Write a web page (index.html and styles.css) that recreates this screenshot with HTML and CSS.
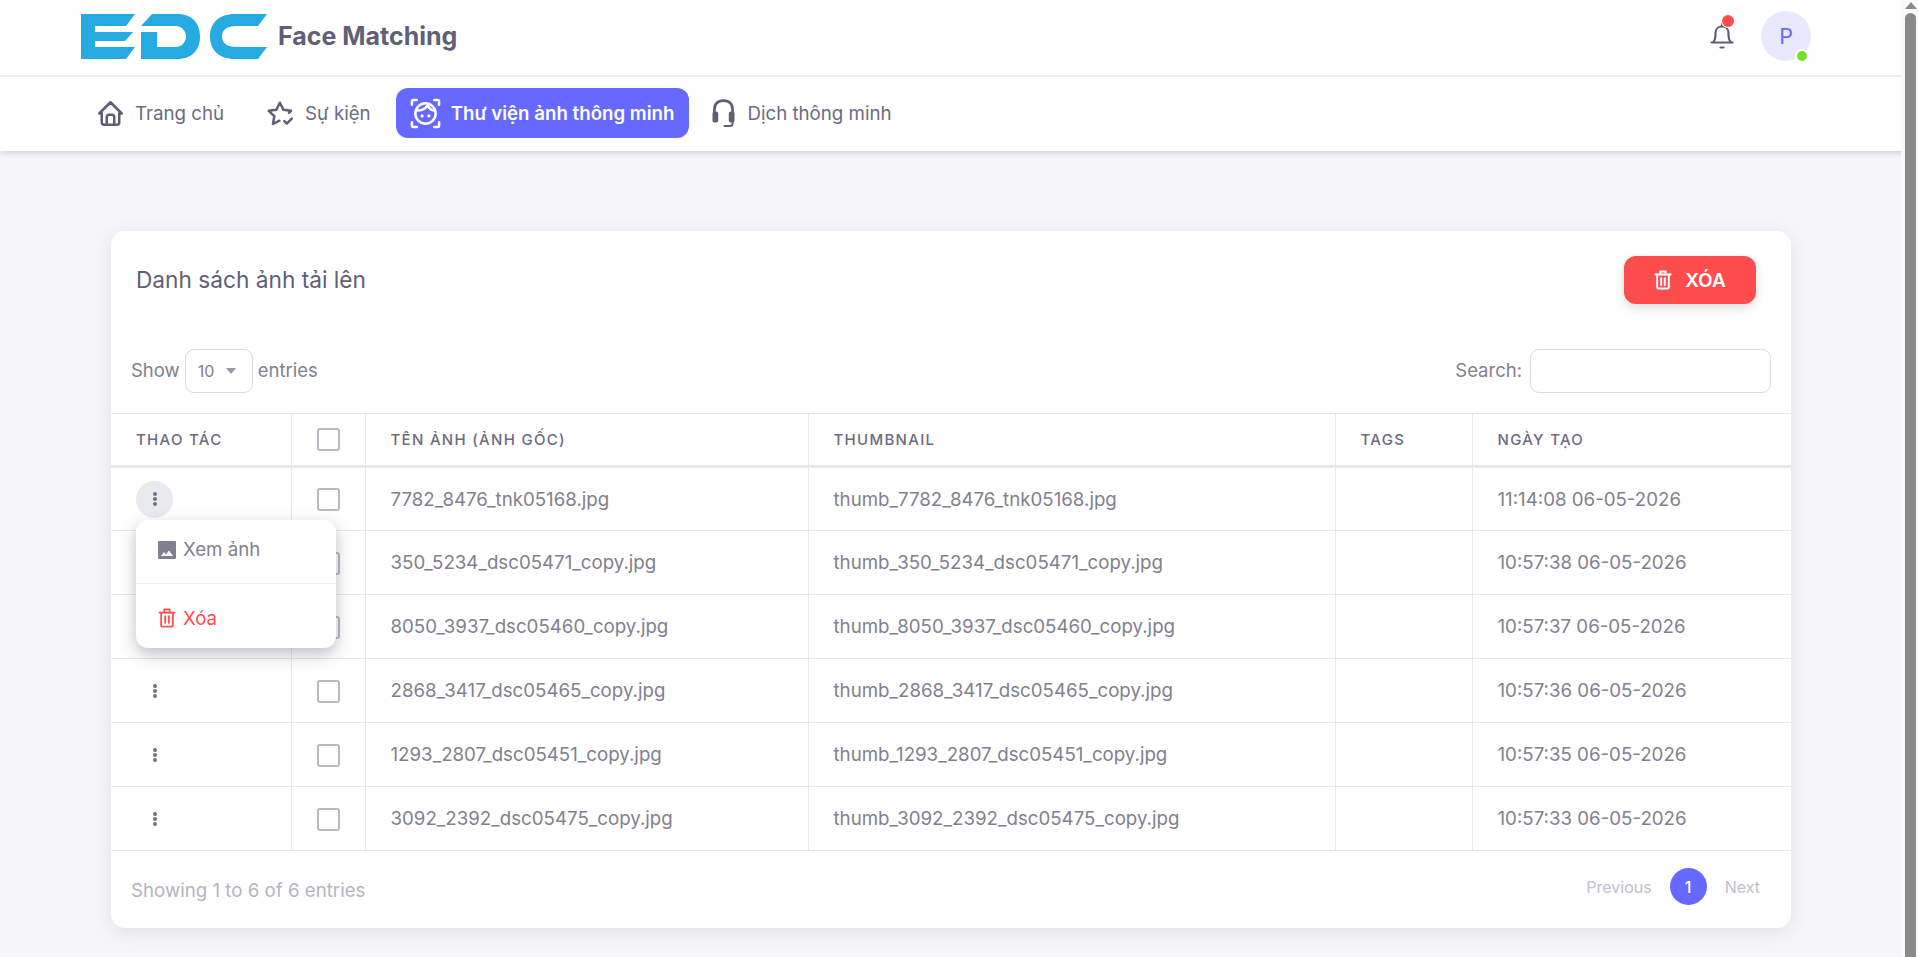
FILE: index.html
```html
<!DOCTYPE html>
<html lang="vi">
<head>
  <meta charset="UTF-8">
  <meta name="viewport" content="width=device-width, initial-scale=1.0">
  <title>Face Matching</title>
  <link rel="stylesheet" href="styles.css">
</head>
<body>
  <header class="page-header">
    <div class="topbar">
      <div class="brand">
        <svg class="logo" viewBox="0 0 187 45" width="187" height="45" fill="#25aae1">
          <path d="M0 0H54L45 12H14V18H52L44 27H14V33H54L45 45H0Z"/>
          <path d="M60 12L71 0H96C112 0 119 10 119 22.500C119 35 112 45 96 45H60V18H76V33H94C101 33 105 28 105 22.500C105 17 101 12 94 12Z"/>
          <path d="M186 0L177 12H155C146 12 141 16 141 22.500C141 29 146 33 155 33H186L177 45H154C138 45 129 36 129 22.500C129 9 138 0 154 0Z"/>
        </svg>
        <span class="brand-name">Face Matching</span>
      </div>
      <div class="topbar-right">
        <div class="bell">
          <svg viewBox="0 0 24 28" width="24" height="28" fill="none" stroke="#5f5e72" stroke-width="2.200" stroke-linecap="round" stroke-linejoin="round">
            <path d="M3.500 20C5 18 5.500 16 5.500 13V11C5.500 7 8.500 4.500 12 4.500C15.500 4.500 18.500 7 18.500 11V13C18.500 16 19 18 20.500 20"/>
            <path d="M1.500 20.500H22.500"/>
            <path d="M12 1.500V4"/>
            <path d="M10.500 25.500H13.500"/>
          </svg>
          <span class="bell-dot"></span>
        </div>
        <div class="avatar">P<span class="avatar-dot"></span></div>
      </div>
    </div>
    <nav class="menu">
      <a class="menu-item home">
        <svg viewBox="2 2 20 20" width="25" height="25" fill="none" stroke="#5f5e72" stroke-width="2" stroke-linecap="round" stroke-linejoin="round"><path d="M5 12H3l9-9 9 9h-2"/><path d="M5 12v7a2 2 0 0 0 2 2h10a2 2 0 0 0 2-2v-7"/><path d="M9 21v-6a2 2 0 0 1 2-2h2a2 2 0 0 1 2 2v6"/></svg>
        Trang chủ
      </a>
      <a class="menu-item event">
        <svg viewBox="1 2 21 21" width="26" height="26" fill="none" stroke="#5f5e72" stroke-width="2" stroke-linecap="round" stroke-linejoin="round"><path d="M11 18.700l-5.200 2.700 1.100-6.300-4.500-4.400 6.200-.9 2.800-5.600 2.800 5.600 6.200.9-1.600 1.600"/><path d="M15 19l2 2 4-4"/></svg>
        Sự kiện
      </a>
      <a class="menu-item active">
        <svg viewBox="0 0 32 32" width="31" height="31" fill="none" stroke="#fff" stroke-width="2.600" stroke-linecap="round" stroke-linejoin="round"><path d="M2 7V3.500C2 2.500 2.500 2 3.500 2H7M25 2h3.500C29.500 2 30 2.500 30 3.500V7M30 25v3.500c0 1-.5 1.500-1.500 1.500H25M7 30H3.500C2.500 30 2 29.500 2 28.500V25"/><circle cx="16" cy="16" r="10.500"/><path d="M6.500 13C12 13 16 11 18 7.500C20 11 23 13 25.500 13"/><circle cx="12.500" cy="18.500" r="1.600" fill="#fff" stroke="none"/><circle cx="19.500" cy="18.500" r="1.600" fill="#fff" stroke="none"/></svg>
        Thư viện ảnh thông minh
      </a>
      <a class="menu-item headset">
        <svg viewBox="0 0 24 29" width="23" height="28" fill="none" stroke="#5f5e72" stroke-width="2.800" stroke-linecap="round" stroke-linejoin="round"><path d="M2.500 15V11C2.500 5 6 1.500 12 1.500S21.500 5 21.500 11V15"/><rect x="1.500" y="14" width="4" height="9.500" rx="1.200" fill="#5f5e72" stroke-width="2"/><rect x="18.500" y="14" width="4" height="9.500" rx="1.200" fill="#5f5e72" stroke-width="2"/><path d="M21.500 24v1.500c0 1.500-1 2.500-2.500 2.500h-6" stroke-width="2"/></svg>
        Dịch thông minh
      </a>
    </nav>
  </header>

  <main class="content">
    <section class="card">
      <div class="card-head">
        <h5 class="card-title">Danh sách ảnh tải lên</h5>
        <button class="btn-delete">
          <svg viewBox="0 0 20 22" width="18" height="20" fill="none" stroke="#fff" stroke-width="2.200" stroke-linecap="round" stroke-linejoin="round"><path d="M1.500 5H18.500"/><path d="M3.500 5V19C3.500 20 4 20.500 5 20.500H15C16 20.500 16.500 20 16.500 19V5"/><path d="M7 5V1.500H13V5"/><path d="M8 9V16.500"/><path d="M12 9V16.500"/></svg>
          XÓA
        </button>
      </div>

      <div class="table-tools">
        <div class="tool-left">
          <span class="tool-label">Show</span>
          <span class="page-size">10<i class="caret"></i></span>
          <span class="tool-label">entries</span>
        </div>
        <div class="tool-right">
          <span class="tool-label">Search:</span>
          <span class="search-box"></span>
        </div>
      </div>

      <table class="data-table">
        <colgroup>
          <col class="col-action"><col class="col-check"><col class="col-name"><col class="col-thumb"><col class="col-tags"><col>
        </colgroup>
        <thead>
          <tr>
            <th>Thao tác</th>
            <th class="cell-check"><span class="checkbox"></span></th>
            <th>Tên ảnh (ảnh gốc)</th>
            <th>Thumbnail</th>
            <th>Tags</th>
            <th>Ngày tạo</th>
          </tr>
        </thead>
        <tbody id="rows"></tbody>
      </table>

      <div class="table-foot">
        <div class="foot-info">Showing 1 to 6 of 6 entries</div>
        <div class="pager">
          <span>Previous</span>
          <span class="pager-current">1</span>
          <span>Next</span>
        </div>
      </div>

      <div class="action-menu">
        <a class="action-item">
          <svg viewBox="0 0 18 18" width="18" height="18" fill="#82808f"><path fill-rule="evenodd" d="M1 0h16a1 1 0 0 1 1 1v16a1 1 0 0 1-1 1H1a1 1 0 0 1-1-1V1a1 1 0 0 1 1-1zM3 15h12l-4-5.500-3 4-2-2.500z"/></svg>
          Xem ảnh
        </a>
        <a class="action-item danger">
          <svg viewBox="0 0 20 22" width="18" height="20" fill="none" stroke="#ff4c4c" stroke-width="2" stroke-linecap="round" stroke-linejoin="round"><path d="M1.500 5H18.500"/><path d="M3.500 5V19C3.500 20 4 20.500 5 20.500H15C16 20.500 16.500 20 16.500 19V5"/><path d="M7 5V1.500H13V5"/><path d="M8 9V16.500"/><path d="M12 9V16.500"/></svg>
          Xóa
        </a>
      </div>
    </section>
  </main>

  <div class="scrollbar">
    <span class="scroll-arrow"></span>
    <span class="scroll-thumb"></span>
  </div>

  <script>
    const images = [
      { name: "7782_8476_tnk05168.jpg", date: "11:14:08 06-05-2026" },
      { name: "350_5234_dsc05471_copy.jpg", date: "10:57:38 06-05-2026" },
      { name: "8050_3937_dsc05460_copy.jpg", date: "10:57:37 06-05-2026" },
      { name: "2868_3417_dsc05465_copy.jpg", date: "10:57:36 06-05-2026" },
      { name: "1293_2807_dsc05451_copy.jpg", date: "10:57:35 06-05-2026" },
      { name: "3092_2392_dsc05475_copy.jpg", date: "10:57:33 06-05-2026" }
    ];

    const rows = document.getElementById("rows");
    images.forEach((img, i) => {
      const tr = document.createElement("tr");
      tr.innerHTML = `
        <td><span class="dots${i === 0 ? " open" : ""}"><i></i><i></i><i></i></span></td>
        <td class="cell-check"><span class="checkbox"></span></td>
        <td>${img.name}</td>
        <td>thumb_${img.name}</td>
        <td></td>
        <td>${img.date}</td>`;
      rows.appendChild(tr);
    });
  </script>
</body>
</html>
```

FILE: styles.css
```css
* {
  box-sizing: border-box;
}

body {
  margin: 0;
  height: 957px;
  overflow: hidden;
  background: #f6f6f9;
  font-family: Inter, "Noto Sans", sans-serif;
  font-size: 18.700px;
  color: #82808f;
}

.page-header {
  background: #fff;
  box-shadow: 0 2px 6px rgba(47, 43, 61, 0.18);
}

.topbar {
  height: 77px;
  display: flex;
  align-items: center;
  justify-content: space-between;
  padding: 0 107px 3px 81px;
  border-bottom: 2px solid #eeeef0;
}

.brand {
  display: flex;
  align-items: center;
  gap: 10px;
}

.logo {
  display: block;
}

.brand-name {
  font-size: 25px;
  font-weight: 700;
  color: #605f75;
}

.topbar-right {
  display: flex;
  align-items: center;
  gap: 27px;
}

.bell {
  position: relative;
  width: 24px;
  height: 28px;
}

.bell-dot {
  position: absolute;
  top: -7px;
  right: 0;
  width: 12px;
  height: 12px;
  border-radius: 50%;
  background: #ff4c4c;
  box-shadow: 0 0 0 1px #fff;
}

.avatar {
  position: relative;
  width: 50px;
  height: 50px;
  border-radius: 50%;
  background: #e8e8ff;
  color: #6569ff;
  display: flex;
  align-items: center;
  justify-content: center;
  font-size: 21.500px;
}

.avatar-dot {
  position: absolute;
  right: 2px;
  bottom: -2px;
  width: 14px;
  height: 14px;
  border-radius: 50%;
  background: #72e128;
  border: 2px solid #fff;
}

.menu {
  height: 74px;
  display: flex;
  align-items: center;
  padding: 0 0 2px 75px;
}

.menu-item {
  height: 50px;
  display: flex;
  align-items: center;
  gap: 12px;
  padding: 0 21px;
  border-radius: 12px;
  color: #6c6b7e;
}

.menu-item.home {
  padding-left: 23px;
}

.menu-item.event {
  padding: 0 25px 0 22px;
}

.menu-item.active {
  background: #6569ff;
  color: #fff;
  font-weight: 600;
  gap: 10px;
  padding: 0 15px 0 14px;
}

.menu-item.headset {
  padding-left: 23px;
}

.content {
  padding: 80px 127px 0 111px;
}

.card {
  position: relative;
  height: 697px;
  background: #fff;
  border-radius: 14px;
  box-shadow: 0 4px 18px rgba(47, 43, 61, 0.1);
}

.card-head {
  display: flex;
  justify-content: space-between;
  align-items: center;
  padding: 25px 35px 0 25px;
}

.card-title {
  margin: -2px 0 0;
  font-size: 22.700px;
  font-weight: 400;
  color: #605f75;
}

.btn-delete {
  width: 132px;
  height: 48px;
  border: 0;
  border-radius: 12px;
  background: #ff4c4c;
  color: #fff;
  font-family: inherit;
  font-size: 19px;
  font-weight: 600;
  display: flex;
  align-items: center;
  justify-content: center;
  gap: 13px;
  box-shadow: 0 4px 10px rgba(47, 43, 61, 0.15);
}

.table-tools {
  display: flex;
  justify-content: space-between;
  align-items: center;
  padding: 0 20px;
  margin-top: 45px;
  height: 44px;
}

.tool-left,
.tool-right {
  display: flex;
  align-items: center;
  gap: 5px;
}

.tool-right {
  gap: 8px;
}

.tool-label {
  font-size: 18.500px;
  margin-top: -3px;
}

.page-size {
  width: 68px;
  height: 44px;
  border: 1px solid #dbdade;
  border-radius: 9px;
  display: flex;
  align-items: center;
  padding-left: 12px;
  font-size: 16px;
  position: relative;
}

.caret {
  position: absolute;
  right: 16px;
  top: 18px;
  border: 5px solid transparent;
  border-top: 6px solid #9b98a5;
  border-bottom: 0;
}

.search-box {
  width: 241px;
  height: 44px;
  border: 1px solid #dbdade;
  border-radius: 9px;
  display: block;
}

.data-table {
  width: 100%;
  margin-top: 20px;
  border-collapse: collapse;
  table-layout: fixed;
}

.col-action { width: 180px; }
.col-check { width: 74px; }
.col-name { width: 443px; }
.col-thumb { width: 527px; }
.col-tags { width: 137px; }

.data-table th,
.data-table td {
  padding: 0 25px;
  border: 1px solid #e8e8ea;
  text-align: left;
}

.data-table th:first-child,
.data-table td:first-child {
  border-left: 0;
}

.data-table th:last-child,
.data-table td:last-child {
  border-right: 0;
}

.data-table th {
  height: 53px;
  border-bottom-width: 3px;
  font-size: 15px;
  font-weight: 500;
  letter-spacing: 1.300px;
  text-transform: uppercase;
  color: #6c6b7e;
}

.data-table td {
  height: 64px;
}

.data-table .cell-check {
  padding: 0;
  text-align: center;
}

.checkbox {
  display: inline-block;
  width: 23px;
  height: 23px;
  border: 2px solid #b9b8c3;
  border-radius: 3px;
  vertical-align: middle;
}

.dots {
  width: 37px;
  height: 37px;
  border-radius: 50%;
  display: flex;
  flex-direction: column;
  align-items: center;
  justify-content: center;
  gap: 1px;
}

.dots.open {
  background: #e9eaee;
}

.dots i {
  width: 4px;
  height: 4px;
  border-radius: 50%;
  background: #687489;
}

.table-foot {
  display: flex;
  justify-content: space-between;
  align-items: center;
  padding: 0 31px 0 20px;
  height: 78px;
}

.foot-info {
  color: #b5b4bf;
}

.pager {
  display: flex;
  align-items: center;
  gap: 18px;
  margin-top: -7px;
  font-size: 16px;
  color: #c0bfc9;
}

.pager-current {
  width: 37px;
  height: 37px;
  border-radius: 50%;
  background: #6569ff;
  color: #fff;
  font-weight: 500;
  display: flex;
  align-items: center;
  justify-content: center;
}

.action-menu {
  position: absolute;
  left: 25px;
  top: 289px;
  width: 200px;
  height: 128px;
  background: #fff;
  border-radius: 12px;
  box-shadow: 0 6px 16px rgba(47, 43, 61, 0.3);
  z-index: 2;
}

.action-item {
  height: 64px;
  display: flex;
  align-items: center;
  gap: 7px;
  padding: 0 0 4px 22px;
  color: #82808f;
}

.action-item:first-child {
  border-bottom: 1px solid #f0f0f2;
}

.action-item.danger {
  color: #ff4c4c;
  padding: 4px 0 0 22px;
}

.scrollbar {
  position: fixed;
  top: 0;
  right: 0;
  width: 17px;
  height: 100%;
  background: #fafafa;
  padding: 2px 2px 0 4px;
}

.scroll-arrow {
  display: block;
  border: 6px solid transparent;
  border-bottom: 7px solid #8a8a8a;
  border-top: 0;
  width: 0;
  margin: 0 auto 4px;
}

.scroll-thumb {
  display: block;
  height: 950px;
  background: #8a8a8a;
  border-radius: 6px 6px 0 0;
}
```
